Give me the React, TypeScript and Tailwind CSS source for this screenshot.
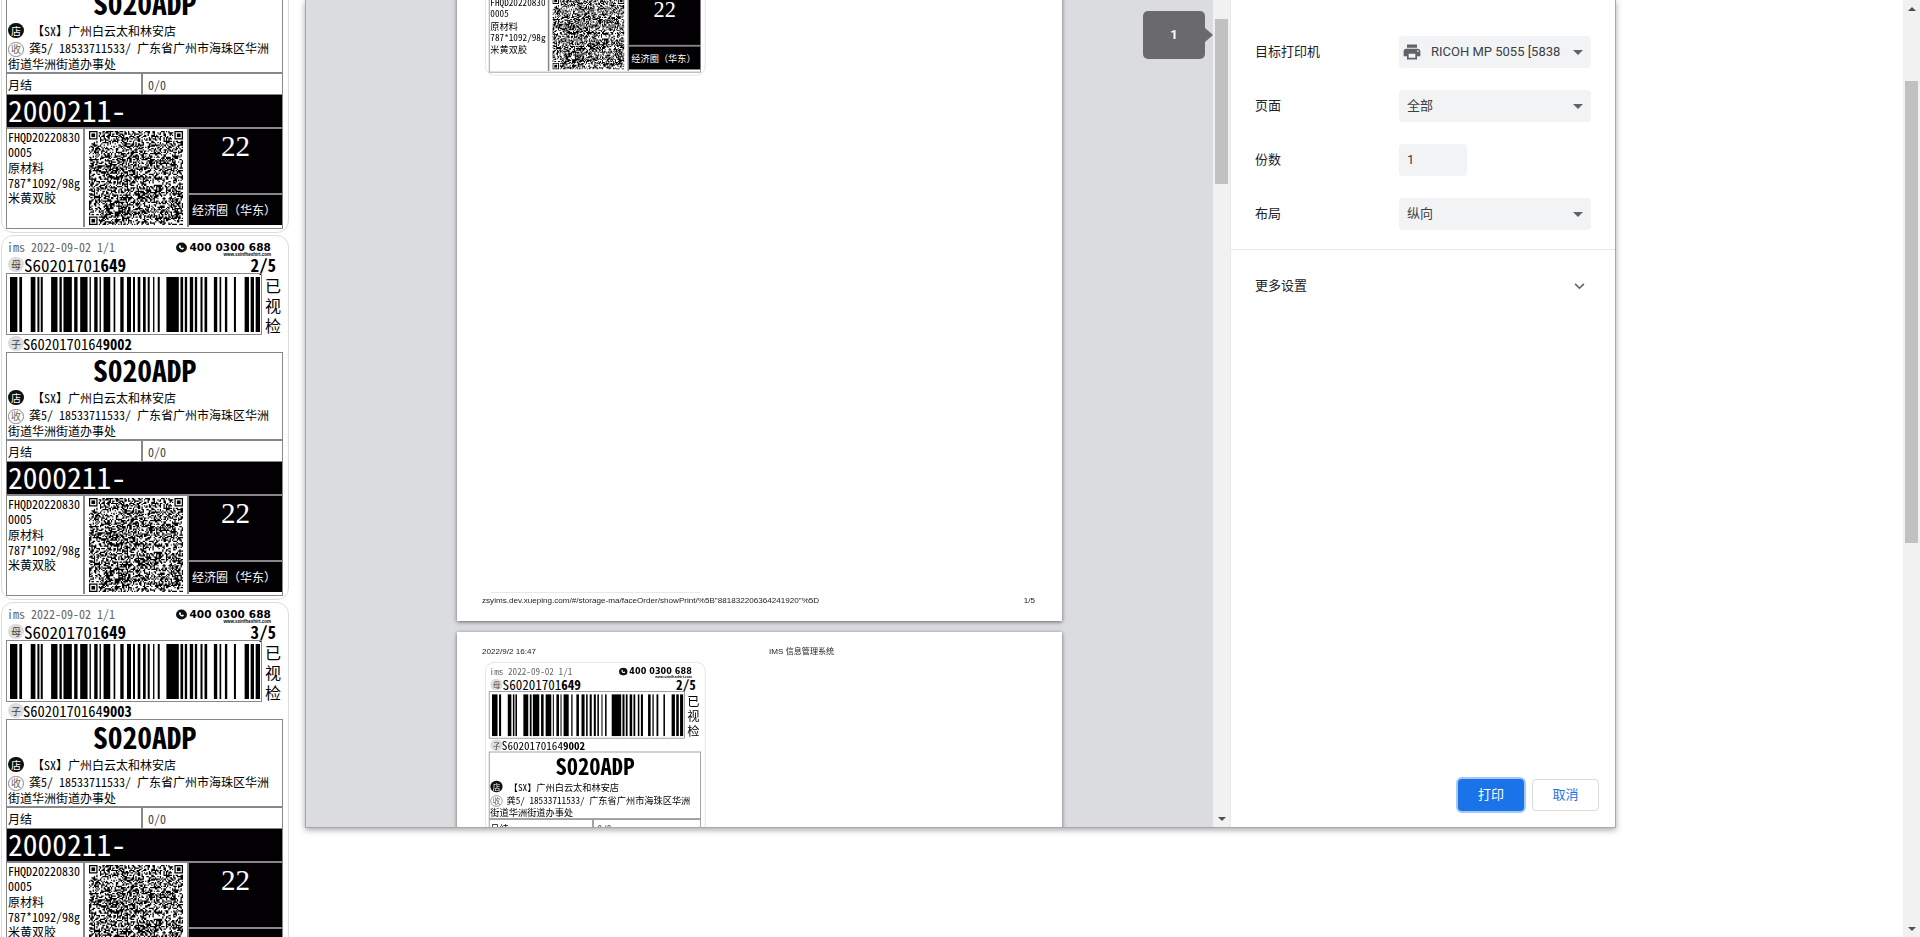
const MONO = "font-['Noto_Sans_Mono_CJK_SC','Liberation_Mono','Noto_Sans_CJK_SC',monospace]";

// bar start/end read off the label, in thirds of a pixel
const BARS = [
  [0, 22], [28, 36], [62, 76], [82, 88], [92, 98], [123, 142], [148, 155], [160, 185], [192, 202], [210, 232], [238, 242],
  [252, 262], [268, 272], [280, 300], [310, 315], [330, 340], [350, 362], [368, 374], [382, 390], [398, 406], [412, 418],
  [428, 432], [442, 448], [468, 505], [510, 518], [523, 530], [538, 548], [553, 560], [570, 576], [582, 590], [610, 620],
  [627, 632], [643, 650], [670, 676], [702, 715], [720, 730], [735, 748],
];

function Barcode() {
  return (
    <svg viewBox="0 0 748 10" preserveAspectRatio="none" className="w-[250px] h-[55px] block">
      {BARS.map(([a, b]) => (
        <rect key={a} x={a} y={0} width={b - a} height={10} fill="#000" />
      ))}
    </svg>
  );
}

// QR noise, seeded so it stays the same on every render
function buildQrPath() {
  const size = 77;
  let seed = 20220830;
  let d = "";
  const inFinder = (r: number, c: number) =>
    (r < 8 && c < 8) || (r < 8 && c >= size - 8) || (r >= size - 8 && c < 8);
  for (let r = 0; r < size; r++) {
    for (let c = 0; c < size; c++) {
      seed = (seed * 1103515245 + 12345) & 0x7fffffff;
      if (!inFinder(r, c) && (seed >> 16) % 2 === 0) d += `M${c} ${r}h1v1h-1z`;
    }
  }
  return d;
}
const QR_PATH = buildQrPath();

function Finder({ x, y }: { x: number; y: number }) {
  return (
    <g>
      <path d={`M${x} ${y}h7v7h-7z M${x + 1} ${y + 1}v5h5v-5z`} fill="#000" fillRule="evenodd" />
      <rect x={x + 2} y={y + 2} width={3} height={3} fill="#000" />
    </g>
  );
}

function QrCode() {
  return (
    <svg viewBox="0 0 77 77" className="w-[94px] h-[94px] block">
      <path d={QR_PATH} fill="#000" />
      <Finder x={0} y={0} />
      <Finder x={70} y={0} />
      <Finder x={0} y={70} />
    </svg>
  );
}

function Badge({ char, kind }: { char: string; kind: "black" | "outline" | "gray" }) {
  const cls =
    kind === "black"
      ? "bg-[#111] text-white"
      : kind === "outline"
        ? "border border-[#888] text-[#666] bg-white"
        : "bg-[#ddd] text-[#444]";
  return (
    <span className={`inline-flex items-center justify-center rounded-full w-[16px] h-[15px] text-[10px] leading-none shrink-0 font-['Noto_Sans_CJK_SC',sans-serif] ${cls}`}>
      {char}
    </span>
  );
}

function Label({ index, suffix }: { index: string; suffix: string }) {
  return (
    <div className={`w-[288px] h-[365px] shrink-0 bg-white border border-[#ddd] rounded-xl pl-[4px] text-black ${MONO}`}>
      {/* top line */}
      <div className="h-[20px] w-[277px] flex items-end justify-between relative">
        <span className="text-[12px] leading-[17px] text-[#666] pl-[1px] pb-px">ims 2022-09-02 1/1</span>
        <div className="flex flex-col items-end mr-[12px] mb-[-1px]">
          <div className="flex items-center gap-[1px] h-[12px]">
            <svg viewBox="0 0 24 24" className="w-[13px] h-[11px]">
              <ellipse cx="12" cy="12" rx="12" ry="11" fill="#111" />
              <path d="M7 8c2-2 3-1 4 1l-1 2c1 1 2 2 3 2l2-1c2 1 3 2 1 4-4 2-11-4-9-8z" fill="#fff" />
            </svg>
            <span className="font-['DejaVu_Sans',sans-serif] font-bold text-[10.5px] leading-none tracking-[0.1px]">400 0300 688</span>
          </div>
          <span className="font-['Liberation_Sans',sans-serif] font-bold text-[4.5px] leading-[4px]">www.sxinfhexhirt.com</span>
        </div>
      </div>

      {/* master number */}
      <div className="h-[17px] w-[277px] flex items-center pl-[2px] pr-[7px]">
        <Badge char="母" kind="gray" />
        <span className="text-[17px] leading-[17px]">
          S60201701<span className="font-bold">649</span>
        </span>
        <span className="ml-auto text-[17px] leading-[17px] font-bold">{index}</span>
      </div>

      {/* barcode */}
      <div className="flex w-[280px]">
        <div className="w-[256px] h-[62px] border border-[#888] pl-[3px] pt-[3px]">
          <Barcode />
        </div>
        <div className="w-[24px] pl-[3px] text-[16px] leading-[20px] pt-[2px]">
          <div>已</div>
          <div>视</div>
          <div>检</div>
        </div>
      </div>

      {/* child number */}
      <div className="h-[17px] flex items-center pl-[2px]">
        <Badge char="子" kind="gray" />
        <span className="text-[14.5px] leading-[17px] ml-[-1px]">
          S6020170164<span className="font-bold">{suffix}</span>
        </span>
      </div>

      {/* main box */}
      <div className="w-[277px] h-[244px] border border-[#888]">
        <div className="h-[88px] border-b-2 border-[#888]">
          <div className="h-[36px] text-center text-[29.5px] leading-[33px] font-bold">S020ADP</div>
          <div className="h-[17px] flex items-center pl-[1px] text-[12px]">
            <Badge char="店" kind="black" />
            <span className="ml-[8px]">【SX】广州白云太和林安店</span>
          </div>
          <div className="text-[12px] leading-[13.5px] pl-[1px] pt-[2px]">
            <Badge char="收" kind="outline" />
            <span className="ml-[5px]">龚5/ 18533711533/ 广东省广州市海珠区华洲</span>
            <br />
            街道华洲街道办事处
          </div>
        </div>
        <div className="h-[21px] flex text-[12px] leading-[21px] border-b border-[#888]">
          <div className="w-[136px] pl-[1px] border-r-2 border-[#888]">月结</div>
          <div className="pl-[5px] text-[#444]">0/0</div>
        </div>
        <div className="h-[32px] bg-[#030003] text-white text-[29.5px] leading-[29px] pl-[1px] border-b-2 border-[#888] box-content">2000211-</div>
        <div className="flex h-[98px]">
          <div className="w-[78px] pl-[1px] text-[12px] leading-[15.3px] border-r-2 border-[#888]">
            <div>FHQD20220830</div>
            <div>0005</div>
            <div>原材料</div>
            <div>787*1092/98g</div>
            <div>米黄双胶</div>
          </div>
          <div className="w-[104px] border-r-2 border-[#888] pl-[4px] pt-[2px]">
            <QrCode />
          </div>
          <div className="flex-1">
            <div className="h-[64px] bg-[#030003] text-white text-center font-['Liberation_Serif',serif] text-[29px] leading-[35px]">22</div>
            <div className="h-[2px] bg-[#888]" />
            <div className="h-[30px] bg-[#030003] text-white text-[12px] leading-[30px] pl-[3px]">经济圈（华东）</div>
          </div>
        </div>
      </div>
    </div>
  );
}

function PreviewPage({ pageNo, className }: { pageNo: string; className?: string }) {
  return (
    <div className={`w-[605px] h-[855px] shrink-0 bg-white shadow-[0_1px_4px_rgba(0,0,0,0.55)] flex flex-col blur-[0.35px] font-['Liberation_Sans','Noto_Sans_CJK_SC',sans-serif] text-[8.1px] text-[#222] ${className ?? ""}`}>
      <div className="flex h-[30px] pl-[25px] pt-[15px] leading-[10px]">
        <span className="w-[287px]">2022/9/2 16:47</span>
        <span>IMS 信息管理系统</span>
      </div>
      <div className="ml-[28px] w-[222px] h-[280px]">
        <div className="origin-top-left scale-[0.766] w-[288px]">
          <Label index="2/5" suffix="9002" />
        </div>
      </div>
      <div className="mt-auto ml-[34px] w-[210px] h-px bg-[#e8e8e8] mb-[3px]" />
      <div className="flex justify-between pl-[25px] pr-[27px] pb-[15px] leading-[10px] h-[25px]">
        <span>zsyims.dev.xueping.com/#/storage-ma/faceOrder/showPrint/%5B"881832206364241920"%5D</span>
        <span>{pageNo}</span>
      </div>
    </div>
  );
}

function Caret() {
  return <span className="ml-auto w-0 h-0 border-x-[5px] border-x-transparent border-t-[5px] border-t-[#5f6368]" />;
}

function SettingRow({ label, children }: { label: string; children: React.ReactNode }) {
  return (
    <div className="flex items-center h-[32px] pl-[24px]">
      <span className="w-[144px] text-[#202124] -mt-[1px]">{label}</span>
      {children}
    </div>
  );
}

function SelectBox({ children }: { children: React.ReactNode }) {
  return (
    <div className="w-[192px] h-[32px] rounded bg-[#f1f3f4] flex items-center pl-[8px] pr-[8px] text-[#3c4043]">
      {children}
      <Caret />
    </div>
  );
}

function ScrollArrow({ up }: { up?: boolean }) {
  return up ? (
    <span className="w-0 h-0 border-x-[4px] border-x-transparent border-b-[4px] border-b-[#505050]" />
  ) : (
    <span className="w-0 h-0 border-x-[4px] border-x-transparent border-t-[4px] border-t-[#505050]" />
  );
}

export default function App() {
  return (
    <div className="relative h-[937px] overflow-hidden bg-white flex">
      {/* label list behind the dialog */}
      <div className="flex-1 overflow-hidden pl-px">
        <div className="flex flex-col gap-[2px] -mt-[132px]">
          <Label index="1/5" suffix="9001" />
          <Label index="2/5" suffix="9002" />
          <Label index="3/5" suffix="9003" />
        </div>
      </div>

      {/* window scrollbar */}
      <div className="w-[17px] h-full bg-[#f1f1f1] flex flex-col items-center">
        <div className="h-[17px] flex items-center justify-center">
          <ScrollArrow up />
        </div>
        <div className="w-[13px] h-[462px] bg-[#c1c1c1] mt-[64px]" />
        <div className="mt-auto h-[17px] flex items-center justify-center">
          <ScrollArrow />
        </div>
      </div>

      {/* print dialog */}
      <div className="absolute left-[305px] top-0 w-[1311px] h-[828px] flex overflow-hidden border-x border-b border-[#a8a8a8] shadow-[0_2px_6px_rgba(0,0,0,0.35)] bg-white">
        <div className="w-[907px] bg-[#dadce0] relative overflow-hidden flex flex-col items-center gap-[11px]">
          <PreviewPage pageNo="1/5" className="-mt-[234px]" />
          <PreviewPage pageNo="2/5" />
          {/* page bubble */}
          <div className="absolute left-[837px] top-[11px] w-[62px] h-[48px] rounded-[5px] bg-[#6a6a6c] flex items-center justify-center text-white font-bold text-[13px] font-['Roboto',sans-serif]">
            1
            <span className="absolute left-full top-[17px] w-0 h-0 border-y-[7px] border-y-transparent border-l-[8px] border-l-[#6a6a6c]" />
          </div>
        </div>

        {/* preview scrollbar */}
        <div className="w-[17px] h-full bg-[#f1f1f1] flex flex-col items-center">
          <div className="w-[13px] h-[165px] bg-[#c1c1c1] mt-[19px]" />
          <div className="mt-auto h-[17px] flex items-center justify-center">
            <ScrollArrow />
          </div>
        </div>

        {/* settings sidebar */}
        <div className="flex-1 border-l border-[#e8e8e8] flex flex-col text-[13px] font-['Roboto','Noto_Sans_CJK_SC',sans-serif]">
          <div className="h-[24px] -mt-[20px] mb-[32px] pl-[24px] pr-[24px] flex justify-between items-center">
            <span className="text-[16px] text-[#202124]">打印</span>
            <span className="text-[#5f6368]">5 张</span>
          </div>
          <div className="flex flex-col gap-[22px]">
            <SettingRow label="目标打印机">
              <SelectBox>
                <svg viewBox="0 0 24 24" className="w-[20px] h-[20px] -ml-[5px] mr-[9px] shrink-0" fill="#5f6368">
                  <path d="M19 8H5c-1.66 0-3 1.34-3 3v6h4v4h12v-4h4v-6c0-1.66-1.34-3-3-3zm-3 11H8v-5h8v5zm3-7c-.55 0-1-.45-1-1s.45-1 1-1 1 .45 1 1-.45 1-1 1zm-1-9H6v4h12V3z" />
                </svg>
                <span className="whitespace-nowrap">RICOH MP 5055 [5838</span>
              </SelectBox>
            </SettingRow>
            <SettingRow label="页面">
              <SelectBox>全部</SelectBox>
            </SettingRow>
            <SettingRow label="份数">
              <div className="w-[68px] h-[32px] rounded bg-[#f1f3f4] flex items-center pl-[8px] text-[#3c4043]">1</div>
            </SettingRow>
            <SettingRow label="布局">
              <SelectBox>纵向</SelectBox>
            </SettingRow>
          </div>
          <div className="h-px bg-[#e8eaed] mt-[19px]" />
          <div className="h-[72px] flex items-center justify-between pl-[24px] pr-[30px] text-[#202124]">
            <span>更多设置</span>
            <svg viewBox="0 0 12 8" className="w-[11px] h-[7px]" fill="none" stroke="#5f6368" strokeWidth="1.8">
              <path d="M1 1l5 5 5-5" />
            </svg>
          </div>
          <div className="mt-auto flex justify-end gap-[8px] pr-[16px] pb-[16px]">
            <button className="w-[66px] h-[32px] rounded bg-[#1a73e8] text-white ring-2 ring-[#a6c8f8]">打印</button>
            <button className="w-[67px] h-[32px] rounded bg-white text-[#1a73e8] border border-[#dadce0]">取消</button>
          </div>
        </div>
      </div>
    </div>
  );
}
